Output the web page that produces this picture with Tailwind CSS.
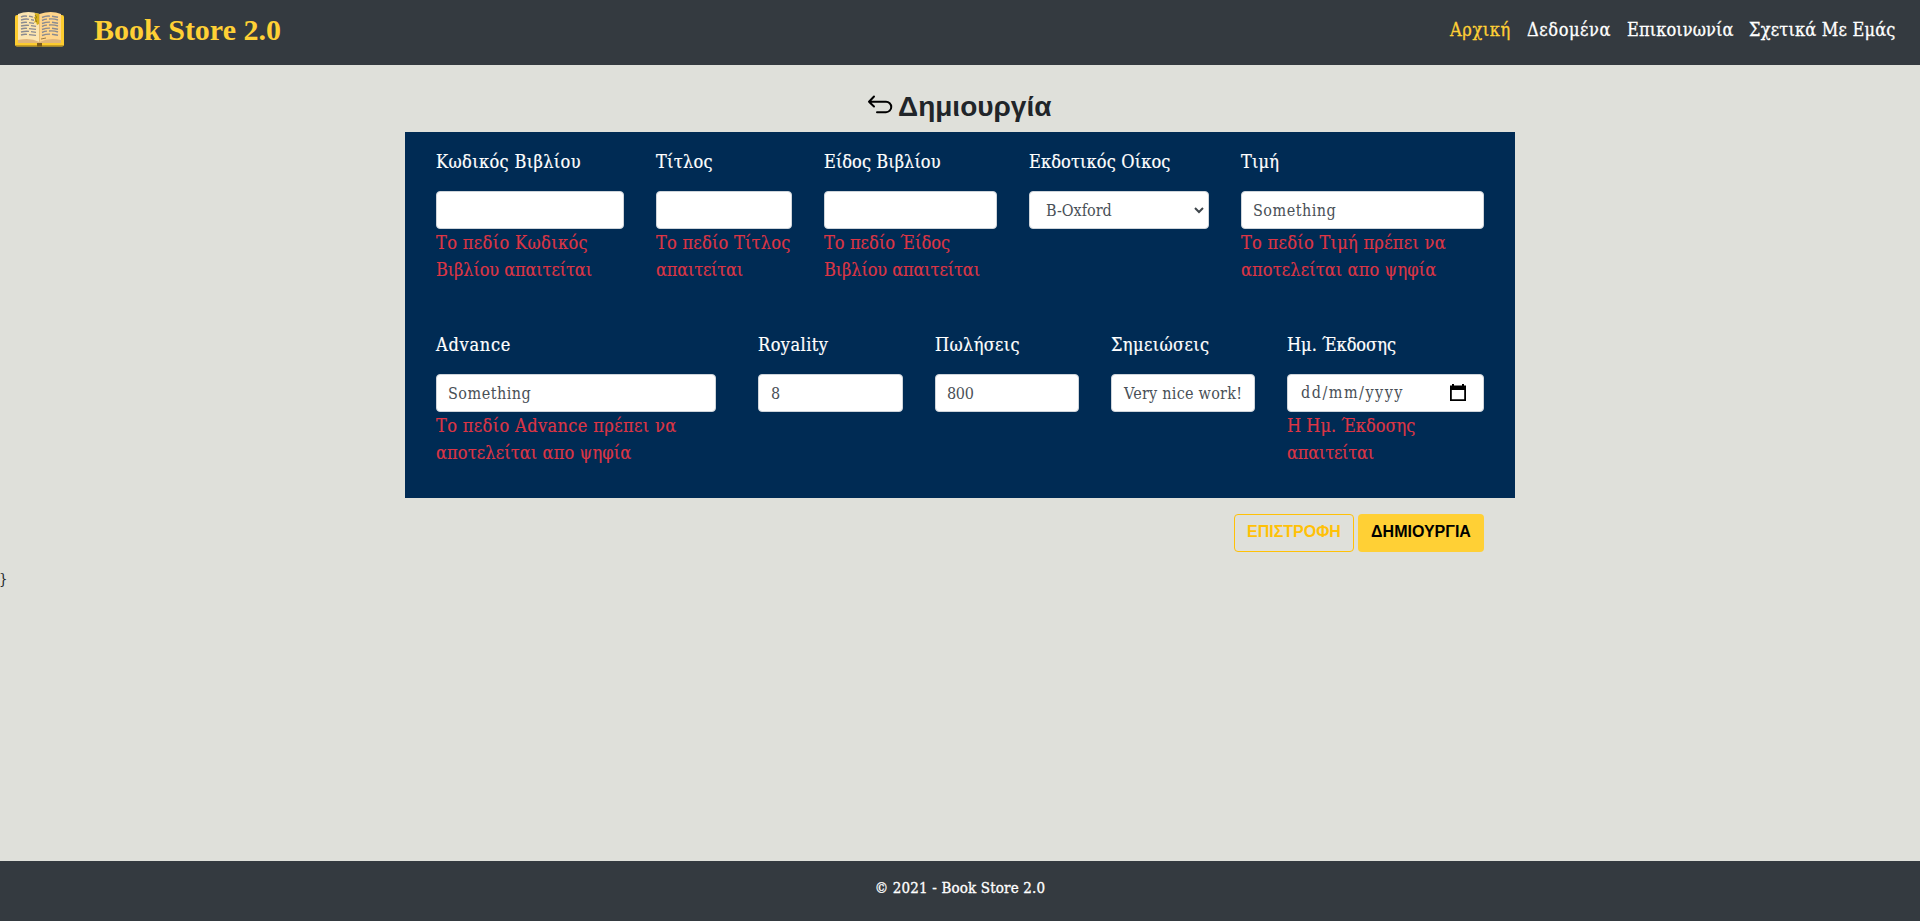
<!DOCTYPE html>
<html lang="el">
<head>
<meta charset="utf-8">
<title>Book Store 2.0</title>
<script src="https://cdn.jsdelivr.net/npm/@tailwindcss/browser@4"></script>
</head>
<body class="flex h-screen flex-col overflow-hidden bg-[#dfe0da] font-['Roboto_Slab','DejaVu_Serif_Condensed','DejaVu_Serif',serif] text-base text-[#212529]">
<header class="flex h-[65px] shrink-0 items-start justify-between bg-[#343a40] pl-[15px] pr-6">
  <div class="flex">
    <svg class="mt-[11px] h-9 w-[49px]" viewBox="0 0 49 36">
      <rect x="0" y="4" width="49" height="31.5" rx="2" fill="#fdcc2f"/>
      <path d="M1 34.700h47" stroke="#b99020"/>
      <rect x="22" y="32" width="5" height="3.500" fill="#7b5a18"/>
      <path d="M3 32V3Q13-1 24.500 3V32Z" fill="#fce5b0"/>
      <path d="M46 32V3Q36-1 24.500 3V32Z" fill="#ffd58b"/>
      <path d="M3 32v-3q12-3 21.500 2q10-5 21.500-2v3z" fill="#dfb57c"/>
      <path d="M24.500 3v28" stroke="#e8bd72"/>
      <g fill="none" stroke="#8b8b91" stroke-width="1.400">
        <path d="M6 6q3-1.500 6-.8m2 0q3 .2 4 1M6 9q5-1.500 8-.6m2 .2l3 .6M6 12q3-1 6-.6m2 .2l5 .8M6 15q5-1.200 8-.6m2 .2l5 .8M6 18q3-1 6-.6m2 .2l7 .8M6 21q5-1.200 8-.6m2 .2l5 .8M6 24q3-1 6-.6m2 .2l7 .8"/>
        <path d="M27 6.500q4-2 8-1.400m2 .1l6 1M27 9.500q3-1.500 5-1.400m2-.1q5-.4 9 1M27 12.500q4-1.500 8-1.400m2 .1l6 1M27 15.500q3-1.500 5-1.400m2-.1q5-.4 9 1M27 18.500q4-1.500 8-1.400m2 .1l6 1M27 21.500q3-1.500 5-1.400m2-.1q5-.4 9 1M27 24.500q4-1.500 8-1.400m2 .1l6 1"/>
      </g>
      <path d="M19.500 2l4.500.8V13l-2 1-1-3-2 1 1.500-4-2-1 2-2z" fill="#d5ae18"/>
      <path d="M20 4l1.500 2-1 2 1 3" fill="none" stroke="#7b681d" stroke-width=".8"/>
      <path d="M26 28l5-1" stroke="#9a7a45"/>
    </svg>
    <span class="ml-[30px] mt-[13px] whitespace-nowrap font-['Liberation_Serif',serif] text-[30px] font-bold leading-[34px] text-[#ffd035]">Book Store 2.0</span>
  </div>
  <nav class="mt-4 flex gap-4 whitespace-nowrap text-[18px] leading-[27px] text-white [-webkit-text-stroke:0.3px]">
    <a class="w-[61px] tracking-[0.6px] text-[#ffd035]">Αρχική</a>
    <a class="w-[84px] tracking-[0.6px]">Δεδομένα</a>
    <a class="w-[106px] tracking-[0.13px]">Επικοινωνία</a>
    <a class="w-[147px] tracking-[0.2px]">Σχετικά Με Εμάς</a>
  </nav>
</header>

<main class="flex-1">
  <div class="mx-auto w-[1110px]">
    <h1 class="flex h-[67px] items-start gap-[5px] pl-[462px] pt-[25px] font-['Liberation_Sans',sans-serif] text-[28px] font-bold leading-[34px]">
      <svg class="mt-[5px] h-5 w-[26px]" viewBox="0 0 26 20" fill="none" stroke="#000" stroke-width="2" stroke-linecap="round" stroke-linejoin="round"><path d="M7 1.500L2 6.700L7 11.500M2 6.700H19a5.200 5.200 0 0 1 0 10.500H10"/></svg>
      <span>Δημιουργία</span>
    </h1>

    <section class="h-[366px] bg-[#002b54] px-[31px] pt-4">
      <div class="flex h-[183px] gap-8 text-[18px] leading-[27px] text-white [-webkit-text-stroke:0.2px]">
        <div class="w-[188px] whitespace-nowrap"><div class="mb-4 tracking-[0.37px]">Κωδικός Βιβλίου</div><div class="h-[38px] rounded border border-[#ced4da] bg-white"></div><p class="text-[#dc3545]"><span class="tracking-[0.37px]">Το πεδίο Κωδικός</span><br><span class="tracking-[-0.1px]">Βιβλίου απαιτείται</span></p></div>
        <div class="w-[136px] whitespace-nowrap"><div class="mb-4 tracking-[0.3px]">Τίτλος</div><div class="h-[38px] rounded border border-[#ced4da] bg-white"></div><p class="text-[#dc3545]"><span class="tracking-[0.25px]">Το πεδίο Τίτλος</span><br><span class="tracking-[-0.18px]">απαιτείται</span></p></div>
        <div class="w-[173px] whitespace-nowrap"><div class="mb-4 tracking-[0.07px]">Είδος Βιβλίου</div><div class="h-[38px] rounded border border-[#ced4da] bg-white"></div><p class="text-[#dc3545]"><span class="tracking-[0.07px]">Το πεδίο Έίδος</span><br><span class="tracking-[-0.1px]">Βιβλίου απαιτείται</span></p></div>
        <div class="w-[180px] whitespace-nowrap"><div class="mb-4 tracking-[0.14px]">Εκδοτικός Οίκος</div><div class="flex h-[38px] items-center justify-between rounded border border-[#ced4da] bg-white pl-4 pr-1 text-base text-[#495057] [-webkit-text-stroke:0]"><span class="mt-0.5">B-Oxford</span><svg class="h-2 w-2.5" viewBox="0 0 10 8" fill="none" stroke="#3f464c" stroke-width="2"><path d="M1 2l4 4 4-4"/></svg></div></div>
        <div class="w-[243px] whitespace-nowrap"><div class="mb-4 tracking-[0.2px]">Τιμή</div><div class="flex h-[38px] items-center rounded border border-[#ced4da] bg-white px-[11px] text-base text-[#495057] [-webkit-text-stroke:0]"><span class="mt-0.5 tracking-[0.5px]">Something</span></div><p class="text-[#dc3545]"><span class="tracking-[0.3px]">Το πεδίο Τιμή πρέπει να</span><br><span class="tracking-[0.13px]">αποτελείται απο ψηφία</span></p></div>
      </div>
      <div class="flex gap-8 text-[18px] leading-[27px] text-white [-webkit-text-stroke:0.2px]">
        <div class="mr-2.5 w-[280px] whitespace-nowrap"><div class="mb-4 tracking-[0.75px]">Advance</div><div class="flex h-[38px] items-center rounded border border-[#ced4da] bg-white px-[11px] text-base text-[#495057] [-webkit-text-stroke:0]"><span class="mt-0.5 tracking-[0.5px]">Something</span></div><p class="text-[#dc3545]"><span class="tracking-[0.38px]">Το πεδίο Advance πρέπει να</span><br><span class="tracking-[0.13px]">αποτελείται απο ψηφία</span></p></div>
        <div class="w-[145px] whitespace-nowrap"><div class="mb-4 tracking-[0.45px]">Royality</div><div class="flex h-[38px] items-center rounded border border-[#ced4da] bg-white px-3 text-base text-[#495057] [-webkit-text-stroke:0]"><span class="mt-0.5 tracking-[-0.3px]">8</span></div></div>
        <div class="w-[144px] whitespace-nowrap"><div class="mb-4 tracking-[0.35px]">Πωλήσεις</div><div class="flex h-[38px] items-center rounded border border-[#ced4da] bg-white px-[11px] text-base text-[#495057] [-webkit-text-stroke:0]"><span class="mt-0.5 tracking-[-0.3px]">800</span></div></div>
        <div class="w-[144px] whitespace-nowrap"><div class="mb-4 tracking-[0.4px]">Σημειώσεις</div><div class="flex h-[38px] items-center rounded border border-[#ced4da] bg-white px-3 text-base text-[#495057] [-webkit-text-stroke:0]"><span class="mt-0.5 tracking-[0.25px]">Very nice work!</span></div></div>
        <div class="w-[197px] whitespace-nowrap"><div class="mb-4">Ημ. Έκδοσης</div><div class="flex h-[38px] items-center justify-between rounded border border-[#ced4da] bg-white pl-[13px] pr-[17px] text-base text-[#495057] [-webkit-text-stroke:0]"><span class="tracking-[1.5px]">dd/mm/yyyy</span><svg class="-mt-0.5 h-[17px] w-4" viewBox="0 0 16 17"><path fill="#000" fill-rule="evenodd" d="M0 1.500h2V0h2v1.500h8V0h2v1.500h2V17H0zM1.800 6v9.200h12.400V6z"/></svg></div><p class="text-[#dc3545]">Η Ημ. Έκδοσης<br><span class="tracking-[-0.18px]">απαιτείται</span></p></div>
      </div>
    </section>

    <div class="mt-4 flex justify-end gap-1 pr-[31px] font-['Liberation_Sans',sans-serif] text-base font-bold">
      <button class="h-[38px] w-[120px] whitespace-nowrap rounded border border-[#ffc107] pb-0.5 text-[#ffc107]">ΕΠΙΣΤΡΟΦΗ</button>
      <button class="h-[38px] w-[126px] whitespace-nowrap rounded bg-[#ffd035] pb-0.5 text-black">ΔΗΜΙΟΥΡΓΙΑ</button>
    </div>
  </div>
  <div class="-ml-px mt-[15px] text-[15px] leading-6">}</div>
</main>

<footer class="flex h-[60px] shrink-0 justify-center bg-[#343a40] pt-[15px] text-[15px] leading-6 text-white"><span class="whitespace-nowrap tracking-[0.16px] [-webkit-text-stroke:0.3px]">© 2021 - Book Store 2.0</span></footer>
</body>
</html>
